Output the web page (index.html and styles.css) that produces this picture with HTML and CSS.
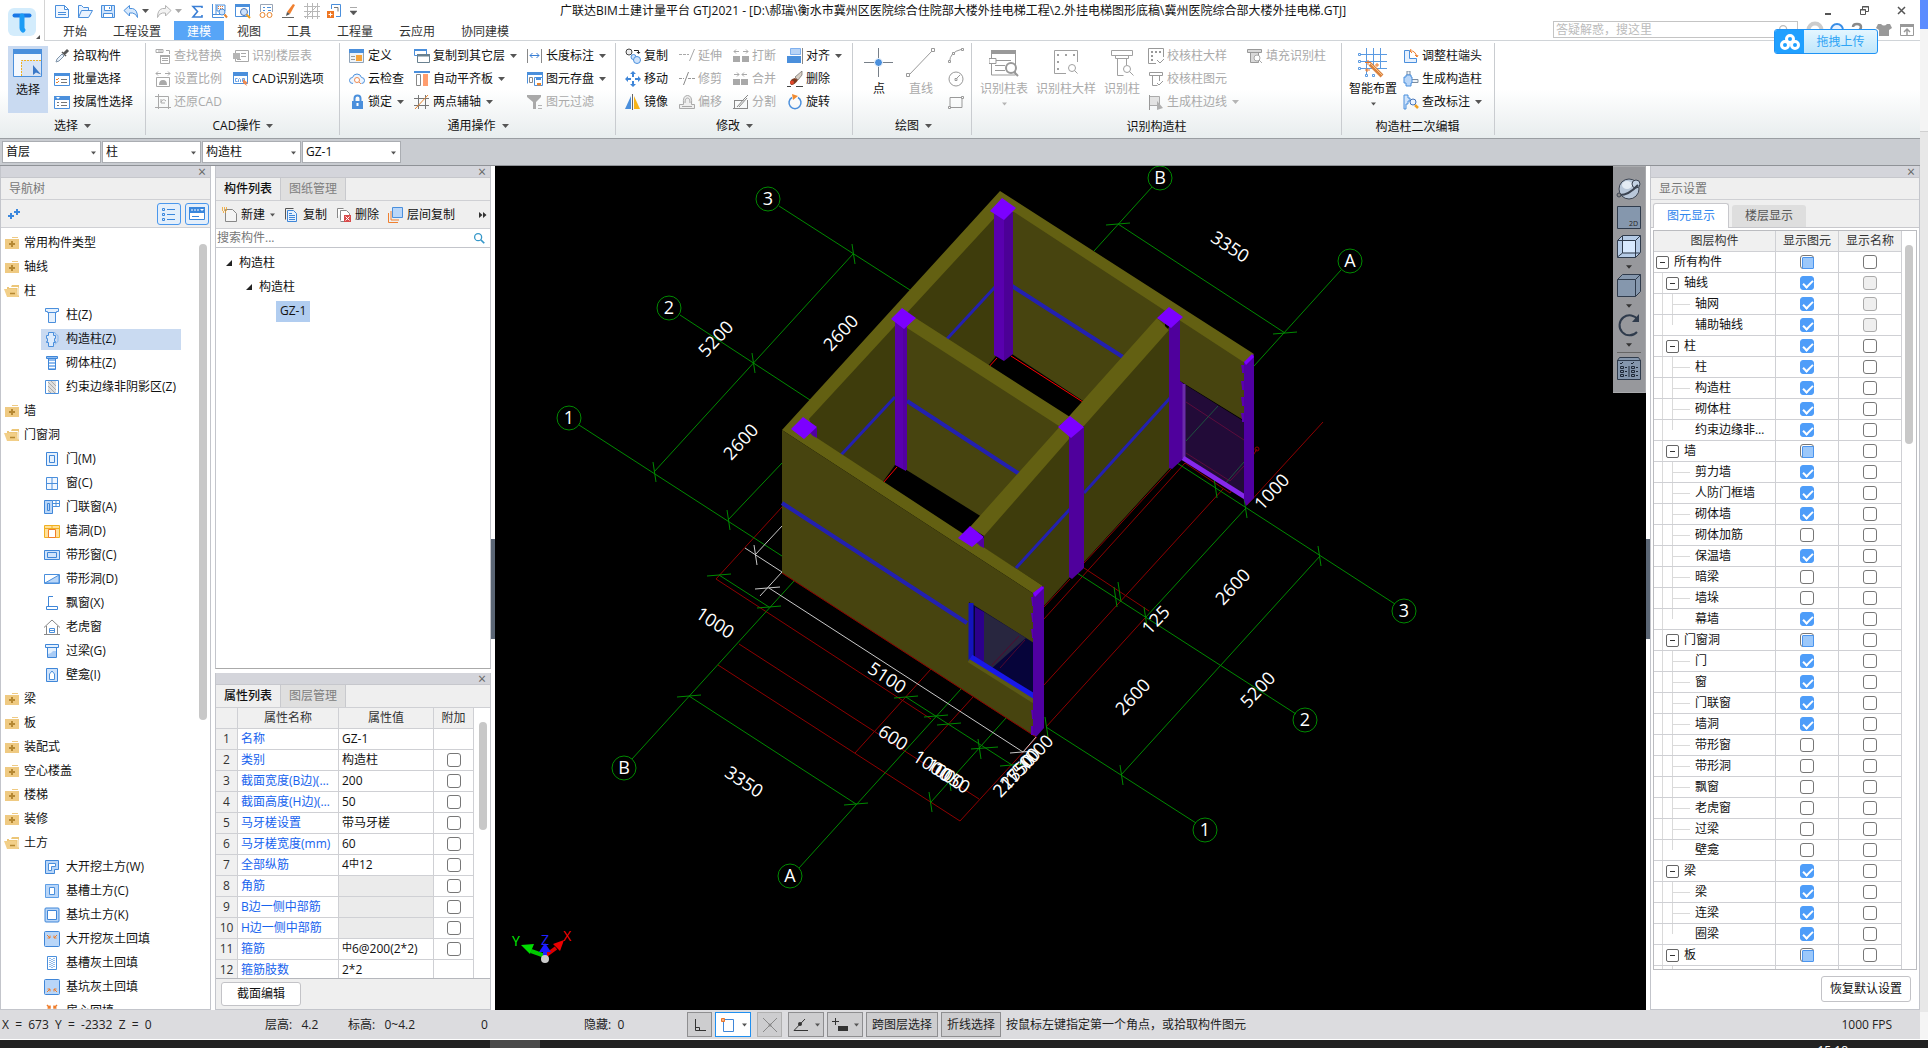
FILE: index.html
```html
<!DOCTYPE html>
<html lang="zh-CN">
<head>
<meta charset="utf-8">
<title>广联达BIM土建计量平台 GTJ2021</title>
<link rel="stylesheet" href="styles.css">
</head>
<body>
<svg class="defs" aria-hidden="true">
  <symbol id="i-caret" viewBox="0 0 7 4"><path d="M0 0h7L3.500 4z" fill="currentColor"/></symbol>
  <symbol id="i-new" viewBox="0 0 16 16"><path d="M1.500 2.500h9l4 4v8h-13zM10.500 2.500v4h4M4 9.500h8M4 11.500h8" fill="#f1f7ff" stroke="#4a8fdc"/></symbol>
  <symbol id="i-open" viewBox="0 0 16 16"><path d="M1.500 14.500v-12h3l2 2h5v3M1.500 14.500l3-7h11l-4 7z" fill="#eaf3ff" stroke="#4a8fdc"/></symbol>
  <symbol id="i-save" viewBox="0 0 16 16"><path d="M1.500 2.500h13v12h-13z" fill="#cfe3fb" stroke="#4a8fdc"/><path d="M4.500 2.500h7v5h-7zM3.500 10.500h9v4h-9zM9.500 4v2" fill="#fff" stroke="#4a8fdc"/></symbol>
  <symbol id="i-undo" viewBox="0 0 16 16"><path d="M1 7.500L6.500 2.500v3h3q5 1 5 9q-1.500-4-5-4.500h-3v3z" fill="#d6e8fc" stroke="#4a8fdc"/></symbol>
  <symbol id="i-redo" viewBox="0 0 16 16"><path d="M15 7.500L9.500 2.500v3h-3q-5 1-5 9q1.500-4 5-4.500h3v3z" fill="#f3f3f3" stroke="#b4b4b4"/></symbol>
  <symbol id="i-sigma" viewBox="0 0 16 16"><path d="M13 5V3.500H4L8.500 8.500 4 14h9v-2" fill="none" stroke="#3a7fd5" stroke-width="1.600"/></symbol>
  <symbol id="i-measure" viewBox="0 0 16 16"><path d="M.500 1v13.500H12M4 1v10M1 11.500h8" fill="none" stroke="#4a8fdc"/><path d="M5 2h8v6H5z" fill="#fff" stroke="#4a8fdc"/><path d="M6 3.500h6M6 5.500h6" stroke="#e07a3a" stroke-dasharray="1 1"/><circle cx="10" cy="9" r="3" fill="#cfe3fb" stroke="#4a8fdc"/><path d="M12.500 11.500L15 14.500" stroke="#e8852f" stroke-width="2"/></symbol>
  <symbol id="i-find" viewBox="0 0 16 16"><path d="M.500 1.500h14v12H.500z" fill="#fff" stroke="#4a8fdc"/><path d="M0 1h15v3H0z" fill="#4a8fdc"/><circle cx="9" cy="9" r="3.500" fill="#cfe3fb" stroke="#4472b8"/><path d="M11.500 11.500L15 15" stroke="#f0a020" stroke-width="2"/></symbol>
  <symbol id="i-review" viewBox="0 0 16 16"><path d="M2.500 9V1.500h12V9" fill="#fff" stroke="#9aa5b5"/><path d="M5 4.500h2M9 4.500h4M5 7.500h2M10 7.500h3" stroke="#4a8fdc"/><circle cx="4.500" cy="12" r="2.500" fill="#fff" stroke="#e8852f"/><circle cx="11.500" cy="12" r="2.500" fill="#fff" stroke="#e8852f"/></symbol>
  <symbol id="i-brush" viewBox="0 0 16 16"><path d="M6 9L12 1l2 1-5 9z" fill="#f08030"/><path d="M6 9l3 2-4 2z" fill="#555"/><path d="M1 14.500h12" stroke="#666"/></symbol>
  <symbol id="i-axisgrid" viewBox="0 0 16 16"><path d="M3.500 0v16M8.500 0v16M13.500 0v16M0 3.500h16M0 8.500h16M0 13.500h16M1 15L14 2" fill="none" stroke="#b8b8b8"/></symbol>
  <symbol id="i-import" viewBox="0 0 16 16"><path d="M4.500 6V1.500h9v12H9" fill="none" stroke="#4a8fdc"/><path d="M7 4.500h4v4" fill="none" stroke="#777"/><path d="M0 8h7v7H0z" fill="#ee7623"/><path d="M3.500 9.500v4M1.500 11.500h4" stroke="#fff"/></symbol>
  <symbol id="i-select" viewBox="0 0 30 30"><path d="M.500 1.500h28v26H.500z" fill="#f4f8fe" stroke="#4a8fdc"/><path d="M8 11h20v16H8z" fill="#d9e4f4"/><path d="M0 0h29v5H0z" fill="#4a8fdc"/><path d="M8.500 27V11.500H28" fill="none" stroke="#f0b020" stroke-dasharray="2 1"/><path d="M20 16v10l3-2.500 5 2z" fill="#3a78c8"/></symbol>
  <symbol id="i-dropper" viewBox="0 0 16 16"><path d="M2 14l1-3 5-5 2 2-5 5z" fill="#e8f1fc" stroke="#8094a8"/><path d="M8 4l4 4M10 5l3-3 1 1-3 3z" fill="#555" stroke="#555" stroke-width="1.500"/></symbol>
  <symbol id="i-batch" viewBox="0 0 16 16"><path d="M.500 2.500h15v12H.500z" fill="#fff" stroke="#4a8fdc"/><path d="M0 2h16v3H0z" fill="#4a8fdc"/><path d="M7 8.500h6M7 11.500h6" stroke="#777"/><path d="M2 8l1 1 2-2M2 11l1 1 2-2" fill="none" stroke="#e8852f"/></symbol>
  <symbol id="i-byprop" viewBox="0 0 16 16"><path d="M.500 2.500h15v12H.500z" fill="#fff" stroke="#4a8fdc"/><path d="M0 2h16v4H0z" fill="#4a8fdc"/><path d="M2 3h4L4 5z" fill="#fff"/><path d="M7 8.500h6M7 11.500h6M3 8.500h2M3 11.500h2" stroke="#777"/></symbol>
  <symbol id="i-replace" viewBox="0 0 16 16"><path d="M1 1.500h7v3H1zM4 1v3M6 1v3M11 2.500h3.500V6M5.500 7.500h9v8h-9zM7 10.500h6M7 12.500h6" fill="none" stroke="#a9a9a9"/><path d="M5 7h10v2H5z" fill="#a9a9a9"/></symbol>
  <symbol id="i-scale" viewBox="0 0 16 16"><path d="M1 2.500h5M10 2.500h5M3 .500L1 2.500l2 2M13 .500l2 2-2 2M1.500 6.500h13v9h-13z" fill="none" stroke="#a9a9a9"/><path d="M4 14q0-5 4-5t4 5z" fill="#a9a9a9"/></symbol>
  <symbol id="i-restore" viewBox="0 0 16 16"><path d="M3.500 0v15M0 2.500h13.500V15M0 13.500h16M6 8q2-4 5-1M6 5v4h4" fill="none" stroke="#a9a9a9"/></symbol>
  <symbol id="i-floortable" viewBox="0 0 16 16"><path d="M2.500 2.500h13v11h-13z" fill="#fff" stroke="#a9a9a9"/><path d="M0 5h7v6H0z" fill="#b5b5b5"/><path d="M8 5.500h5M8 8.500h5M4 11.500h4" stroke="#a9a9a9"/></symbol>
  <symbol id="i-cadopt" viewBox="0 0 16 16"><path d="M.500 1.500h14v11H.500z" fill="#fff" stroke="#4a8fdc"/><path d="M0 1h15v4H0z" fill="#4a8fdc"/><path d="M4.500 7.500h-2v3h2M5.500 11V8.500l1-1 1 1V11M9.500 7.500h2v3h-2z" fill="none" stroke="#6aa3e6"/><path d="M10 8l5 4-2 .5 1 2.500-4-3z" fill="#f08a50"/></symbol>
  <symbol id="i-define" viewBox="0 0 16 16"><path d="M.500 1.500h14v13H.500z" fill="#eef3f8" stroke="#8fa3b8"/><path d="M0 1h15v4H0z" fill="#4a8fdc"/><path d="M2 8.500h4M2 11.500h4" stroke="#999"/><path d="M7 7h6v6H7z" fill="#f5a33a"/></symbol>
  <symbol id="i-cloud" viewBox="0 0 16 16"><path d="M4 12.500q-3.500 0-3.500-3t3-3Q4.500 3 8 3t4.500 3.500q3 0 3 3t-3 3" fill="#eef5fe" stroke="#4a8fdc"/><circle cx="8" cy="9" r="2.500" fill="#fff" stroke="#f08a50"/><path d="M10 11l2 2" stroke="#f08a50"/></symbol>
  <symbol id="i-lock" viewBox="0 0 16 16"><path d="M5.500 7V4.500q0-3 3-3t3 3V7" fill="none" stroke="#4a8fdc" stroke-width="2"/><path d="M3 7h11v8H3z" fill="#4a8fdc"/><path d="M8.500 9v3" stroke="#fff" stroke-width="2"/></symbol>
  <symbol id="i-copyto" viewBox="0 0 16 16"><path d="M.500 1.500h12v6h-12z" fill="#fff" stroke="#4a8fdc"/><path d="M0 1h13v2H0z" fill="#4a8fdc"/><path d="M3.500 6.500h12v8h-12z" fill="#fff" stroke="#69808f"/><path d="M3 6h13v2.500H3z" fill="#69808f"/></symbol>
  <symbol id="i-alignslab" viewBox="0 0 16 16"><path d="M0 1h16" stroke="#4a8fdc" stroke-width="2"/><path d="M2.500 3.500h4v11h-4z" fill="#fff" stroke="#888"/><path d="M9 3h5v12H9z" fill="#ff9d6e"/></symbol>
  <symbol id="i-auxaxis" viewBox="0 0 16 16"><path d="M4.500 1v14M11.500 1v14M0 4.500h15M0 11.500h15" stroke="#777" fill="none"/><path d="M1 15L14 1" stroke="#e8852f"/></symbol>
  <symbol id="i-length" viewBox="0 0 16 16"><path d="M.500 1v14M14.500 1v14" stroke="#888"/><path d="M3 7.500h9M5.500 5L3 7.500 5.500 10M9.500 5L12 7.500 9.500 10" fill="none" stroke="#3a7fd5"/></symbol>
  <symbol id="i-store" viewBox="0 0 16 16"><path d="M.500 12.500v-11h15V7" fill="none" stroke="#4a8fdc"/><path d="M0 1h16v3H0z" fill="#4a8fdc"/><path d="M2.500 6.500h3v5h-3z" fill="none" stroke="#888"/><path d="M7.500 6.500h8v8h-8z" fill="#fff" stroke="#4a8fdc" stroke-width="1"/><path d="M9 7h5v2H9z" fill="#4a8fdc"/><path d="M10 12h4v2.500h-4z" fill="#e8852f"/></symbol>
  <symbol id="i-filter" viewBox="0 0 16 16"><path d="M0 1h14v2L9 8v7H6V8L0 3z" fill="#a9a9a9"/><path d="M11 11.500h4M11 14.500h4" stroke="#b5b5b5"/></symbol>
  <symbol id="i-copy" viewBox="0 0 16 16"><circle cx="4" cy="4" r="3" fill="#eee" stroke="#444"/><path d="M9 2.500h4.500V5" fill="none" stroke="#222"/><path d="M11.500 4h4l-2 2z" fill="#222"/><circle cx="8.500" cy="9" r="2.500" fill="#cfe3fb" stroke="#4a8fdc"/><circle cx="12" cy="12" r="3.500" fill="#cfe3fb" stroke="#4a8fdc"/></symbol>
  <symbol id="i-move" viewBox="0 0 16 16"><path d="M8 0l3 3H5zM8 16l3-3H5zM0 8l3-3v6zM16 8l-3-3v6zM7 3h2v3H7zM7 10h2v3H7zM3 7h3v2H3zM10 7h3v2h-3z" fill="#3f86d8"/></symbol>
  <symbol id="i-mirror" viewBox="0 0 16 16"><path d="M6 2v13H0z" fill="#4a8fdc"/><path d="M7.500 0v16" stroke="#666"/><path d="M9 2v13h6z" fill="#f8b418"/></symbol>
  <symbol id="i-extend" viewBox="0 0 16 16"><path d="M0 6.500h10" stroke="#a9a9a9" stroke-dasharray="3 1"/><path d="M15.500 1L10.500 13" stroke="#a9a9a9"/></symbol>
  <symbol id="i-trim" viewBox="0 0 16 16"><path d="M0 7.500h5M9 7.500h7" stroke="#999" stroke-dasharray="3 1"/><path d="M9.500 1L4.500 14" stroke="#888"/></symbol>
  <symbol id="i-offset" viewBox="0 0 16 16"><path d="M.500 14.500v-4h4q-1-9 4-9t4 9h3v4zM3 12.500h10M6 9q0-5 2.500-5T11 9" fill="#eee" stroke="#a9a9a9"/></symbol>
  <symbol id="i-break" viewBox="0 0 16 16"><path d="M0 8h7v6H0zM9 8h7v6H9z" fill="#a9a9a9"/><path d="M1 3.500h5M3 1.500l-2 2 2 2M10 3.500h5M13 1.500l2 2-2 2" fill="none" stroke="#a9a9a9"/></symbol>
  <symbol id="i-merge" viewBox="0 0 16 16"><path d="M0 8h7v6H0zM8 8h7v6H8z" fill="#a9a9a9"/><path d="M1 3.500h5M4 1.500l2 2-2 2M9 3.500h5M11 1.500l-2 2 2 2" fill="none" stroke="#a9a9a9"/></symbol>
  <symbol id="i-split" viewBox="0 0 16 16"><path d="M1.500 6.500h9M1.500 6v9M0 14.500h15M14.500 6v9M4 13l7-8 4-4M6 13l8-9" fill="none" stroke="#888"/></symbol>
  <symbol id="i-align" viewBox="0 0 16 16"><path d="M3.500 .500h10v6h-10z" fill="#b7d3f6" stroke="#7fb0ee"/><path d="M0 8h14v7H0z" fill="#4a8fdc"/><path d="M15.500 0v16" stroke="#888"/></symbol>
  <symbol id="i-erase" viewBox="0 0 16 16"><path d="M0 15.500h4M9 15.500h7" stroke="#444"/><path d="M8 6l7-6v4l-4 5z" fill="#d8cfc4" stroke="#555" stroke-width=".6"/><path d="M3 12q0-4 5-5l3 2q-3 5-7 5z" fill="#7a3a20"/><circle cx="5" cy="11.500" r="2" fill="#e2462a"/></symbol>
  <symbol id="i-rotate" viewBox="0 0 16 16"><path d="M5 3.500a6 6 0 1 0 6 0" fill="none" stroke="#4a8fdc" stroke-width="1.500"/><path d="M5 0l6 2-5 4z" fill="#f08a30"/></symbol>
  <symbol id="i-point" viewBox="0 0 30 30"><path d="M14.500 0v29M0 14.500h29" stroke="#777f88"/><circle cx="14.500" cy="14.500" r="4" fill="#4a8fdc" stroke="#fff"/></symbol>
  <symbol id="i-line" viewBox="0 0 30 30"><path d="M3 27L26 3" stroke="#999"/><path d="M.500 25.500h3v3h-3zM25.500 .500h3v3h-3z" fill="#fff" stroke="#999"/></symbol>
  <symbol id="i-arc" viewBox="0 0 16 16"><path d="M1.500 14Q2 4 13 1.500" fill="none" stroke="#999"/><path d="M.500 12.500h2v2h-2zM4.500 4.500h2v2h-2zM13.500 .500h2v2h-2z" fill="#fff" stroke="#999"/></symbol>
  <symbol id="i-circle" viewBox="0 0 16 16"><circle cx="8" cy="8" r="7" fill="none" stroke="#999"/><path d="M7 7.500h2v2H7zM9 7l3-3" fill="none" stroke="#999"/></symbol>
  <symbol id="i-rect" viewBox="0 0 16 16"><path d="M2 3.500h12v10H2z" fill="none" stroke="#999"/><path d="M.500 12.500h2v2h-2zM13.500 2.500h2v2h-2z" fill="#fff" stroke="#999"/></symbol>
  <symbol id="i-idtable" viewBox="0 0 30 30"><path d="M2.500 3v24h24V3M6 12.500h16M6 17.500h10M6 22.500h10" fill="none" stroke="#999"/><path d="M2 2h25v4H2z" fill="#999"/><path d="M0 10.500h7v5H0z" fill="#fff" stroke="#999"/><circle cx="22" cy="20" r="5" fill="#fff" stroke="#999" stroke-width="2"/><path d="M25 24l4 4" stroke="#999" stroke-width="2"/></symbol>
  <symbol id="i-iddetail" viewBox="0 0 30 30"><path d="M15 25.500H3.500v-23h23V14" fill="none" stroke="#a0a0a0"/><path d="M6 6h2v2H6zM14 6h2v2h-2zM22 6h2v2h-2zM6 13h2v2H6zM6 20h2v2H6z" fill="#a0a0a0"/><circle cx="21" cy="20" r="3.500" fill="#fff" stroke="#a0a0a0"/><path d="M23.500 22.500l3 3" stroke="#a0a0a0"/></symbol>
  <symbol id="i-idcol" viewBox="0 0 30 30"><path d="M4.500 2.500h21v5h-21zM8.500 7.500h13v3h-13zM10.500 10.500v17h6M19.500 10.500V17" fill="none" stroke="#a0a0a0"/><circle cx="20" cy="21" r="3.500" fill="#fff" stroke="#a0a0a0"/><path d="M22.500 23.500l4 4" stroke="#a0a0a0"/></symbol>
  <symbol id="i-chkdetail" viewBox="0 0 16 16"><path d="M8 15.500H.500V.500h15V9" fill="none" stroke="#999"/><path d="M3 3h2v2H3zM7 3h2v2H7zM11 3h2v2h-2zM3 7h2v2H3zM3 11h2v2H3z" fill="#999"/><path d="M9 12l3 3 4-4" fill="none" stroke="#999"/></symbol>
  <symbol id="i-chkelem" viewBox="0 0 16 16"><path d="M1.500 1.500h13v3h-13zM4.500 4.500v10h5M11.500 4.500V10" fill="none" stroke="#999"/><path d="M9 12l2 2 4-4" fill="none" stroke="#999"/></symbol>
  <symbol id="i-genedge" viewBox="0 0 16 16"><path d="M1.500 2.500h10v9h-10z" fill="#e3e3e3" stroke="#aaa"/><path d="M1.500 1v15" stroke="#999"/><path d="M9 7v9l6-2z" fill="#b0b0b0"/></symbol>
  <symbol id="i-fillid" viewBox="0 0 16 16"><path d="M.500 1.500h14v3H.500zM3.500 4.500h8v10h-8z" fill="#d9d9d9" stroke="#999"/><circle cx="10" cy="10" r="3" fill="#fff" stroke="#aaa"/><path d="M12 12l3 3" stroke="#aaa"/></symbol>
  <symbol id="i-smart" viewBox="0 0 30 30"><path d="M8.500 0v26M15.500 0v22M22.500 0v20M2 6.500h27M2 13.500h27M2 20.500h27" stroke="#5a9ae2" fill="none"/><path d="M.500 5.500h2v2h-2zM.500 12.500h2v2h-2zM.500 19.500h2v2h-2zM7.500 26.500h2v2h-2zM14.500 26.500h2v2h-2z" fill="#fff" stroke="#5a9ae2"/><path d="M12 16l12 12" stroke="#d9823f" stroke-width="4"/><path d="M13 16l11 11" stroke="#f6c48c"/><path d="M10 12v5M7 14.500h6M19 15v4M17 17h4M9 20v4M7 22h5" stroke="#ef7d2b"/></symbol>
  <symbol id="i-adjust" viewBox="0 0 16 16"><path d="M1.500 2.500h5v8h7v4h-12z" fill="#e6f0fd" stroke="#4a8fdc"/><path d="M7 3q5-1 7 6M8 1l-1 2 2 2M12 7l2 2 1-2" fill="none" stroke="#ef7d2b"/></symbol>
  <symbol id="i-genstruct" viewBox="0 0 16 16"><path d="M4 0h3v4H4zM8 8.500h7v3H8z" fill="#eef3f8" stroke="#7c8da0"/><path d="M3 4h5v2h1v6H8v3H3v-3H1V6h2z" fill="#b9d6f8" stroke="#4a8fdc"/></symbol>
  <symbol id="i-chknote" viewBox="0 0 16 16"><path d="M1 1h4v3h2v3H5v3H3v5H1z" fill="#cfe3fb" stroke="#4a8fdc"/><circle cx="10" cy="8" r="3" fill="#eaf3ff" stroke="#4472b8"/><path d="M12 11l3 3" stroke="#f0a020" stroke-width="2.500"/></symbol>
  <symbol id="i-mag" viewBox="0 0 16 16"><circle cx="7" cy="7" r="4" fill="none" stroke="currentColor" stroke-width="1.500"/><path d="M10 10l4 4" stroke="currentColor" stroke-width="2"/></symbol>
  <symbol id="i-folder" viewBox="0 0 16 16"><path d="M2 4h14v10H2zM9 2h6v1H9z" fill="#efca82"/><path d="M9 6v6M6 9h6" stroke="#b58833" stroke-width="2"/></symbol>
  <symbol id="i-folderopen" viewBox="0 0 16 16"><path d="M4 4h4l1-2h7v12H4z" fill="#ecc678"/><path d="M6 4.500h9v8" fill="none" stroke="#fff"/><path d="M1 6h12l2 8H4z" fill="#f2cf88"/><path d="M7 10.500h5" stroke="#b58833" stroke-width="1.500"/></symbol>
  <symbol id="t-col" viewBox="0 0 16 16"><path d="M1.500 1.500h13v3h-2v1h-9v-1h-2zM4.500 5.500v10h7v-10" fill="#e6f1fd" stroke="#4a8fdc"/></symbol>
  <symbol id="t-gz" viewBox="0 0 16 16"><path d="M6 1.500h5q1 3 3 3v6q-2 1-3 3" fill="none" stroke="#8ab8ee"/><path d="M4.500 1.500h5v3h2v3h-1v3h1v1h-2v4h-5v-4h-2v-1h1v-3h-1v-3h2z" fill="#dcebfc" stroke="#4a8fdc"/></symbol>
  <symbol id="t-brick" viewBox="0 0 16 16"><path d="M2.500 1.500h11v2h-11zM4.500 3.500h7v11h-7z" fill="#8fbcf0" stroke="#3f86d8"/><path d="M5 6.500h6M5 9.500h6M5 12.500h6" stroke="#fff"/></symbol>
  <symbol id="t-hatch" viewBox="0 0 16 16"><path d="M1.500 1.500h13v13h-13z" fill="#fff" stroke="#4a8fdc"/><path d="M4 2h8v12H4z" fill="#ddd"/><path d="M4 3l8 8M4 7l7 7M4 11l3 3M7 2l5 5" stroke="#aaa"/></symbol>
  <symbol id="t-door" viewBox="0 0 16 16"><path d="M2.500 1.500h11v13h-11zM5.500 4.500h5v7h-5z" fill="#e6f1fd" stroke="#3f86d8"/></symbol>
  <symbol id="t-win" viewBox="0 0 16 16"><path d="M2.500 2.500h11v12h-11zM8 2v12M3 8.500h10" fill="#f1f7ff" stroke="#4a8fdc"/></symbol>
  <symbol id="t-dw" viewBox="0 0 16 16"><path d="M.500 1.500h8v13h-8zM3.500 4.500h2v7h-2z" fill="#b9d6f8" stroke="#3f86d8"/><path d="M8.500 1.500h7v6h-7zM12 2v6M8 4.500h8" fill="#fff" stroke="#4a8fdc"/></symbol>
  <symbol id="t-hole" viewBox="0 0 16 16"><path d="M.500 2.500h15v12H.500z" fill="#ffe09a" stroke="#f0b020"/><path d="M0 5.500h16M8 2v3" stroke="#f0b020"/><path d="M4.500 6.500h7v8h-7z" fill="#fff" stroke="#ef7d2b"/></symbol>
  <symbol id="t-sw" viewBox="0 0 16 16"><path d="M.500 3.500h15v9H.500zM3.500 5.500h9v5h-9z" fill="#cfe3fb" stroke="#3f86d8"/></symbol>
  <symbol id="t-sh" viewBox="0 0 16 16"><path d="M.500 3.500h15v9H.500z" fill="#fff" stroke="#4a8fdc"/><path d="M1 12h14V4z" fill="#b9d6f8" stroke="#4a8fdc"/></symbol>
  <symbol id="t-bay" viewBox="0 0 16 16"><path d="M9 1.500H4.500v10M2.500 11.500h11v3h-11z" fill="none" stroke="#3f86d8"/></symbol>
  <symbol id="t-dormer" viewBox="0 0 16 16"><path d="M0 8.500L8 1l8 7.500M2.500 7v8M13.500 7v8M0 15.500h16" fill="none" stroke="#888"/><path d="M5.500 9.500h5v4h-5zM5 11.500h6" fill="none" stroke="#4a8fdc"/></symbol>
  <symbol id="t-lintel" viewBox="0 0 16 16"><path d="M1.500 1.500h13v3h-13zM3.500 4.500h9v10h-9z" fill="#e6f1fd" stroke="#3f86d8"/><path d="M4 14v-3l3-1 2-2h3v6z" fill="#a8cbf5"/></symbol>
  <symbol id="t-niche" viewBox="0 0 16 16"><path d="M2.500 1.500h11v13h-11z" fill="#cfe3fb" stroke="#3f86d8"/><path d="M5.500 12.500V7l2.500-3 2.500 3v5.500z" fill="#fff" stroke="#4a8fdc"/></symbol>
  <symbol id="t-ex" viewBox="0 0 16 16"><path d="M1.500 1.500h13v9h-4v4h-9z" fill="#b9d6f8" stroke="#3f86d8"/><path d="M4.500 4.500h7v3h-4v4h-3z" fill="#fff" stroke="#4a8fdc"/></symbol>
  <symbol id="t-trench" viewBox="0 0 16 16"><path d="M1.500 1.500h13v13h-13z" fill="#b9d6f8" stroke="#5f9fe6"/><path d="M5.500 4.500h5v7h-5z" fill="#fff" stroke="#4a8fdc"/></symbol>
  <symbol id="t-pit" viewBox="0 0 16 16"><rect x="1" y="1" width="14" height="14" rx="1" fill="#b9d6f8" stroke="#3f86d8"/><path d="M3.500 3.500h9v9h-9z" fill="#fff" stroke="#3f86d8"/></symbol>
  <symbol id="t-fill" viewBox="0 0 16 16"><rect x=".5" y=".5" width="15" height="15" rx="1" fill="#b9d6f8" stroke="#3f86d8"/><path d="M3 4l3 3M6 4.500V7H3.500M13 4l-3 3M10 4.500V7h2.500" fill="none" stroke="#ef7d2b"/></symbol>
  <symbol id="t-fillup" viewBox="0 0 16 16"><rect x=".5" y=".5" width="15" height="15" rx="1" fill="#b9d6f8" stroke="#3f86d8"/><path d="M3 13l3-3M6 12.500V10H3.500M13 13l-3-3M10 12.500V10h2.500" fill="none" stroke="#ef7d2b"/></symbol>
  <symbol id="t-room" viewBox="0 0 16 16"><path d="M3 2l3 3M6 2.500V5H3.500M13 2l-3 3M10 2.500V5h2.500M3 14l3-3M13 14l-3-3" fill="none" stroke="#ef7d2b" stroke-width="1.500"/></symbol>
  <symbol id="t-dots" viewBox="0 0 16 16"><path d="M3.500 1.500h9v13h-9z" fill="#fff" stroke="#4a8fdc"/><path d="M6 3v10M8 4v10M10 3v10" stroke="#6fa5e4" stroke-dasharray="1 1" stroke-width="1.500"/></symbol>
</svg>

<div class="desktop">
<div class="app">
  <header class="top">
    <button class="logo" aria-label="应用菜单"><svg width="30" height="30" viewBox="0 0 30 30"><rect x="1" y="0" width="28" height="28" rx="6" fill="#d3ecfc"/><path d="M7.500 7.500h15" stroke="#1a78e6" stroke-width="4" stroke-linecap="round"/><path d="M15 8v12q0 1 1 2" stroke="#1c9cf5" stroke-width="5" stroke-linecap="round" fill="none"/></svg><svg class="corner" width="4" height="4"><path d="M4 0v4H0z" fill="#555"/></svg></button>
    <div class="topmain">
      <div class="titlebar">
        <div class="qat">
          <button aria-label="新建"><svg><use href="#i-new"/></svg></button>
          <button aria-label="打开"><svg><use href="#i-open"/></svg></button>
          <button aria-label="保存"><svg><use href="#i-save"/></svg></button>
          <button aria-label="撤销" class="split"><svg><use href="#i-undo"/></svg><svg class="caret"><use href="#i-caret"/></svg></button>
          <button aria-label="恢复" class="split off"><svg><use href="#i-redo"/></svg><svg class="caret"><use href="#i-caret"/></svg></button>
          <button aria-label="汇总"><svg><use href="#i-sigma"/></svg></button>
          <button aria-label="查量"><svg><use href="#i-measure"/></svg></button>
          <button aria-label="查找"><svg><use href="#i-find"/></svg></button>
          <button aria-label="检查"><svg><use href="#i-review"/></svg></button>
          <button aria-label="格式刷"><svg><use href="#i-brush"/></svg></button>
          <button aria-label="轴网"><svg><use href="#i-axisgrid"/></svg></button>
          <button aria-label="导入"><svg><use href="#i-import"/></svg></button>
          <button aria-label="自定义" class="more"><svg class="caret" viewBox="0 0 7 8"><path d="M0 .500h7M0 4h7L3.500 8z" fill="#555" stroke="#555" stroke-width=".5"/></svg></button>
        </div>
        <h1>广联达BIM土建计量平台 GTJ2021 - [D:\郝瑞\衡水市冀州区医院综合住院部大楼外挂电梯工程\2.外挂电梯图形底稿\冀州医院综合部大楼外挂电梯.GTJ]</h1>
        <div class="wincontrols">
          <button aria-label="最小化"><svg width="8" height="9" viewBox="0 0 8 9"><path d="M1 8h6" stroke="#555" stroke-width="2"/></svg></button>
          <button aria-label="还原"><svg width="9" height="9" viewBox="0 0 9 9"><path d="M2.500 3V.500h6v5H6M.500 3.500h5v5h-5zM0 4h6M2 1h7" fill="none" stroke="#555"/></svg></button>
          <button aria-label="关闭"><svg width="9" height="9" viewBox="0 0 9 9"><path d="M1 1l7 7M8 1L1 8" stroke="#555" stroke-width="1.500"/></svg></button>
        </div>
      </div>
      <div class="tabbar">
        <nav class="tabs">
          <a href="#">开始</a><a href="#">工程设置</a><a href="#" class="on">建模</a><a href="#">视图</a><a href="#">工具</a><a href="#">工程量</a><a href="#">云应用</a><a href="#">协同建模</a>
        </nav>
        <div class="help">
          <div class="asksearch"><input type="text" aria-label="搜索帮助" placeholder="答疑解惑，搜这里"><svg width="14" height="14"><use href="#i-mag"/></svg></div>
          <button aria-label="用户"><svg width="18" height="18" viewBox="0 0 18 18"><circle cx="9" cy="9" r="6.500" fill="none" stroke="#ccc" stroke-width="4"/></svg></button>
          <button aria-label="客服"><svg width="18" height="18" viewBox="0 0 18 18"><circle cx="9" cy="9" r="6" fill="#e8f2ff" stroke="#3a8ee6" stroke-width="2"/></svg></button>
          <button aria-label="帮助"><svg width="14" height="18" viewBox="0 0 14 18"><path d="M3 6q0-3 4-3t4 3-4 4v2" fill="none" stroke="#8a8a8a" stroke-width="2.500"/></svg></button>
          <button aria-label="皮肤" class="skin"><svg width="16" height="18" viewBox="0 0 16 18"><path d="M2 3h3q3 3 6 0h3l2 4-3 2v6H3V9L0 7z" fill="#999"/></svg></button>
          <button aria-label="收起功能区"><svg width="14" height="18" viewBox="0 0 14 18"><path d="M.500 3.500h13v11H.500z" fill="none" stroke="#999"/><path d="M0 3h14v3H0z" fill="#999"/><path d="M7 14V8M4 11l3-3 3 3" fill="none" stroke="#999" stroke-width="1.500"/></svg></button>
        </div>
      </div>
    </div>
  </header>

  <section class="ribbon">
    <div class="group g-select">
      <div class="tools">
        <button class="big on"><svg><use href="#i-select"/></svg>选择</button>
        <div class="col">
          <button class="tool"><svg><use href="#i-dropper"/></svg>拾取构件</button>
          <button class="tool"><svg><use href="#i-batch"/></svg>批量选择</button>
          <button class="tool"><svg><use href="#i-byprop"/></svg>按属性选择</button>
        </div>
      </div>
      <button class="name">选择<svg class="caret"><use href="#i-caret"/></svg></button>
    </div>
    <div class="group g-cad">
      <div class="tools">
        <div class="col">
          <button class="tool" disabled><svg><use href="#i-replace"/></svg>查找替换</button>
          <button class="tool" disabled><svg><use href="#i-scale"/></svg>设置比例</button>
          <button class="tool" disabled><svg><use href="#i-restore"/></svg>还原CAD</button>
        </div>
        <div class="col">
          <button class="tool" disabled><svg><use href="#i-floortable"/></svg>识别楼层表</button>
          <button class="tool"><svg><use href="#i-cadopt"/></svg>CAD识别选项</button>
        </div>
      </div>
      <button class="name">CAD操作<svg class="caret"><use href="#i-caret"/></svg></button>
    </div>
    <div class="group g-common">
      <div class="tools">
        <div class="col">
          <button class="tool"><svg><use href="#i-define"/></svg>定义</button>
          <button class="tool"><svg><use href="#i-cloud"/></svg>云检查</button>
          <button class="tool"><svg><use href="#i-lock"/></svg>锁定<svg class="caret"><use href="#i-caret"/></svg></button>
        </div>
        <div class="col">
          <button class="tool"><svg><use href="#i-copyto"/></svg>复制到其它层<svg class="caret"><use href="#i-caret"/></svg></button>
          <button class="tool"><svg><use href="#i-alignslab"/></svg>自动平齐板<svg class="caret"><use href="#i-caret"/></svg></button>
          <button class="tool"><svg><use href="#i-auxaxis"/></svg>两点辅轴<svg class="caret"><use href="#i-caret"/></svg></button>
        </div>
        <div class="col">
          <button class="tool"><svg><use href="#i-length"/></svg>长度标注<svg class="caret"><use href="#i-caret"/></svg></button>
          <button class="tool"><svg><use href="#i-store"/></svg>图元存盘<svg class="caret"><use href="#i-caret"/></svg></button>
          <button class="tool" disabled><svg><use href="#i-filter"/></svg>图元过滤</button>
        </div>
      </div>
      <button class="name">通用操作<svg class="caret"><use href="#i-caret"/></svg></button>
    </div>
    <div class="group g-modify">
      <div class="tools">
        <div class="col">
          <button class="tool"><svg><use href="#i-copy"/></svg>复制</button>
          <button class="tool"><svg><use href="#i-move"/></svg>移动</button>
          <button class="tool"><svg><use href="#i-mirror"/></svg>镜像</button>
        </div>
        <div class="col">
          <button class="tool" disabled><svg><use href="#i-extend"/></svg>延伸</button>
          <button class="tool" disabled><svg><use href="#i-trim"/></svg>修剪</button>
          <button class="tool" disabled><svg><use href="#i-offset"/></svg>偏移</button>
        </div>
        <div class="col">
          <button class="tool" disabled><svg><use href="#i-break"/></svg>打断</button>
          <button class="tool" disabled><svg><use href="#i-merge"/></svg>合并</button>
          <button class="tool" disabled><svg><use href="#i-split"/></svg>分割</button>
        </div>
        <div class="col">
          <button class="tool"><svg><use href="#i-align"/></svg>对齐<svg class="caret"><use href="#i-caret"/></svg></button>
          <button class="tool"><svg><use href="#i-erase"/></svg>删除</button>
          <button class="tool"><svg><use href="#i-rotate"/></svg>旋转</button>
        </div>
      </div>
      <button class="name">修改<svg class="caret"><use href="#i-caret"/></svg></button>
    </div>
    <div class="group g-draw">
      <div class="tools">
        <button class="big"><svg><use href="#i-point"/></svg>点</button>
        <button class="big" disabled><svg><use href="#i-line"/></svg>直线</button>
        <div class="col">
          <button class="tool" disabled aria-label="弧"><svg><use href="#i-arc"/></svg></button>
          <button class="tool" disabled aria-label="圆"><svg><use href="#i-circle"/></svg></button>
          <button class="tool" disabled aria-label="矩形"><svg><use href="#i-rect"/></svg></button>
        </div>
      </div>
      <button class="name">绘图<svg class="caret"><use href="#i-caret"/></svg></button>
    </div>
    <div class="group g-identify">
      <div class="tools">
        <button class="big" disabled><svg><use href="#i-idtable"/></svg>识别柱表<svg class="caret"><use href="#i-caret"/></svg></button>
        <button class="big" disabled><svg><use href="#i-iddetail"/></svg>识别柱大样</button>
        <button class="big" disabled><svg><use href="#i-idcol"/></svg>识别柱</button>
        <div class="col">
          <button class="tool" disabled><svg><use href="#i-chkdetail"/></svg>校核柱大样</button>
          <button class="tool" disabled><svg><use href="#i-chkelem"/></svg>校核柱图元</button>
          <button class="tool" disabled><svg><use href="#i-genedge"/></svg>生成柱边线<svg class="caret"><use href="#i-caret"/></svg></button>
        </div>
        <div class="col">
          <button class="tool" disabled><svg><use href="#i-fillid"/></svg>填充识别柱</button>
        </div>
      </div>
      <span class="name">识别构造柱</span>
    </div>
    <div class="group g-second">
      <div class="tools">
        <button class="big"><svg><use href="#i-smart"/></svg>智能布置<svg class="caret"><use href="#i-caret"/></svg></button>
        <div class="col">
          <button class="tool"><svg><use href="#i-adjust"/></svg>调整柱端头</button>
          <button class="tool"><svg><use href="#i-genstruct"/></svg>生成构造柱</button>
          <button class="tool"><svg><use href="#i-chknote"/></svg>查改标注<svg class="caret"><use href="#i-caret"/></svg></button>
        </div>
      </div>
      <span class="name">构造柱二次编辑</span>
    </div>
  </section>

  <section class="filters">
    <label class="combo"><select aria-label="楼层"><option>首层</option></select><svg class="caret"><use href="#i-caret"/></svg></label>
    <label class="combo"><select aria-label="构件大类"><option>柱</option></select><svg class="caret"><use href="#i-caret"/></svg></label>
    <label class="combo"><select aria-label="构件类型"><option>构造柱</option></select><svg class="caret"><use href="#i-caret"/></svg></label>
    <label class="combo"><select aria-label="构件"><option>GZ-1</option></select><svg class="caret"><use href="#i-caret"/></svg></label>
  </section>

  <main class="main">
    <aside class="panel nav">
      <div class="grip"><button aria-label="关闭导航树">×</button></div>
      <h2 class="ptitle">导航树</h2>
      <div class="navtools">
        <button aria-label="展开" class="plus"><svg width="14" height="12" viewBox="0 0 14 12"><path d="M4 5v6M1 8h6M10 1v6M7 4h6" stroke="#3a87dd" stroke-width="2"/></svg></button>
        <button aria-label="列表视图" class="view"><svg width="14" height="14" viewBox="0 0 14 14"><path d="M5 2.500h8M5 7.500h8M5 12.500h8M.500 1.500h2v2h-2zM.500 6.500h2v2h-2zM.500 11.500h2v2h-2z" fill="none" stroke="#3a87dd"/></svg></button>
        <button aria-label="图标视图" class="view"><svg width="16" height="14" viewBox="0 0 16 14"><path d="M.500 .500h15v12H.500z" fill="#fff" stroke="#3a87dd"/><path d="M0 0h16v6H0z" fill="#3a87dd"/><path d="M2 3h2M5 3h2M8 3h2" stroke="#fff"/><path d="M11 2h4l-2 2z" fill="#fff"/><path d="M3 9.500h7" stroke="#3a87dd"/></svg></button>
      </div>
      <div class="navbody"><ul class="navlist" id="nav"></ul><div class="thumb navthumb"></div></div>
    </aside>

    <div class="middle">
      <section class="panel comps">
        <div class="grip"><button aria-label="关闭构件列表">×</button></div>
        <div class="ptabs"><button class="on">构件列表</button><button>图纸管理</button></div>
        <div class="comptools">
          <button><svg viewBox="0 0 16 16"><path d="M3.500 2.500h7l4 4v8h-11z" fill="#f4f4f4" stroke="#888"/><path d="M0 1h5M0 3h5M1 5h4" stroke="#f0a020" stroke-width="1.500" stroke-dasharray="1 1"/></svg>新建<svg class="caret"><use href="#i-caret"/></svg></button>
          <button><svg viewBox="0 0 16 16"><path d="M1.500 12.500v-11h8" fill="none" stroke="#555"/><path d="M3.500 3.500h6l3 3v8h-9zM5 8.500h6M5 10.500h6M5 12.500h6M5 6.500h3" fill="#e6f1fd" stroke="#3f86d8"/></svg>复制</button>
          <button><svg viewBox="0 0 16 16"><path d="M1.500 11V1.500h6M4.500 13.500v-10h6l3 3v8h-9" fill="#fff" stroke="#888"/><path d="M8 8h7v7H8z" fill="#d94a4a"/><path d="M9.500 9.500l4 4M13.500 9.500l-4 4" stroke="#fff"/></svg>删除</button>
          <button><svg viewBox="0 0 16 16"><path d="M.500 6v9.500H10M3 4v9h8" fill="none" stroke="#ef8030" stroke-width="1"/><path d="M4.500 .500h10v10h-10z" fill="#b9d6f8" stroke="#4a8fdc"/></svg>层间复制</button>
          <button aria-label="更多" class="more"><svg width="8" height="6" viewBox="0 0 8 6"><path d="M0 0l3.500 3L0 6zM4 0l3.500 3L4 6z" fill="#333"/></svg></button>
        </div>
        <div class="search"><input type="text" aria-label="搜索构件" placeholder="搜索构件..."><svg><use href="#i-mag"/></svg></div>
        <ul class="comptree">
          <li><svg class="tri"><path d="M6 0v6H0z"/></svg>构造柱</li>
          <li class="l1"><svg class="tri"><path d="M6 0v6H0z"/></svg>构造柱</li>
          <li class="l2"><span class="sel">GZ-1</span></li>
        </ul>
      </section>
      <section class="panel props">
        <div class="grip"><button aria-label="关闭属性列表">×</button></div>
        <div class="ptabs"><button class="on">属性列表</button><button>图层管理</button></div>
        <div class="propbody">
          <table class="proptable">
            <colgroup><col class="c-no"><col class="c-name"><col class="c-val"><col class="c-add"></colgroup>
            <thead><tr><th></th><th>属性名称</th><th>属性值</th><th>附加</th></tr></thead>
            <tbody id="props"></tbody>
          </table>
          <div class="thumb propthumb"></div>
        </div>
        <div class="propfoot"><button class="btn">截面编辑</button></div>
      </section>
    </div>

    <div class="splitter"></div>

    <section class="stage">
      <svg class="scene" viewBox="495 166 1151 844" role="img" aria-label="三维模型">
        <g class="red"><path d="M1323 422L1247 505M1185 463L1044 619M1223 489L1044 685M1145 618L1046 727M1084 568L1149 611M782 507L716 579L931 719M739 644L979 799M718 665L960 821L1037 737M931 669L855 753M973 697L924 751M1185 463L1230 493L1257 449"/></g>
        <g class="green">
          <path d="M779 206L910 290M680 315L810 400M579 425L782 556M853 254L654 472M782 463L728 520M719 575L769 607"/>
          <path d="M1152 187L1094 251M1341 270L1254 366M1118 224L1285 333M794 581L632 759M961 689L799 868M689 696L856 804"/>
          <path d="M1006 718L931 802M906 697L1012 765M1077 573L1296 714M1177 463L1395 604M1046 727L1196 823M1246 508L1146 617M1320 556L1121 775"/>
          <path d="M852 244l3 20M752 353l3 20M653 462l3 20M727 510l3 20M1214 478l3 20M1244 498l3 20M1318 546l3 20M1114 587l3 20M1118 582l3 20M1144 607l3 20M1120 765l3 20M1045 717l3 20M978 739l3 20M948 771l3 20M929 792l3 20"/>
          <path d="M707 576l24-2M757 608l24-2M1106 225l24-2M1273 334l24-2M677 697l24-2M844 805l24-2M894 698l24-2M924 717l24-2M937 725l24-2M971 749l27-2M1000 766l24-2"/>
        </g>
        <g class="white"><path d="M769 588L1023 752M782 572L760 596M745 548L782 572M782 526L755 555M1036 737L1023 752M754 545l3 20M755 589l25-2M1010 753l24-2"/></g>

        <path class="inner" d="M996 212V356L987 367 905 465V305z"/>
        <path class="face" d="M1012 208L1165 308V455L1012 354z"/>
        <path class="rl" d="M997 358L987 369M1011 356L1086 404"/>
        <path class="band" d="M995 287L946 340"/><path class="band w" d="M1012 286L1126 359"/>
        <path class="inner" d="M805 420L895 320V465L882 483 815 441z"/>
        <path class="face" d="M905 325L1062 426V438L982 517 905 469z"/>
        <path class="rl" d="M897 467L883 483"/>
        <path class="band" d="M895 397L841 455"/><path class="band w" d="M907 401L1021 475"/>
        <path class="inner" d="M1084 422L1170 326V468L1084 562zM984 534L1070 436V577L1043 607V586L984 548z"/>
        <path class="band" d="M1084 493L1170 398M1070 509L1016 568"/>
        <path class="face" d="M1179 318L1245 361V421L1180 381z"/>
        <path class="strip" d="M782 430L1000 191 1254 354 1245 363 1014 212 1000 212 809 419 817 438 1043 586 1034 594z"/>
        <path class="strip" d="M914 317L1070 417 1059 426 904 326zM1157 318L1169 330 1083 427 1069 439 984 536 970 527z"/>
        <path class="face" d="M782 430L1034 594 1036 737 782 573z"/>
        <path class="redln" d="M782 573L1036 737M1084 563L1171 469M1044 607L1070 579"/>
        <path class="band w" d="M782 503L967 623"/>

        <path d="M994 212V355L1004 361V212z" fill="#5900ae"/><path d="M1004 212V361L1013 354V212z" fill="#4c0096"/>
        <path d="M895 320V465L906 471V320z" fill="#5900ae"/><path d="M903 320h4V470l-4-2z" fill="#5200a0"/>
        <path d="M1169 320V468L1172 469 1184 458V384L1180 381V318z" fill="#4f009c"/>
        <path d="M1069 427V577L1072 579 1084 568V427z" fill="#4f009c"/>
        <path d="M805 428h12v10l-4-2z M972 538h12v10l-4-2z" fill="#5200a0"/>
        <path class="cap" d="M1002 198L1016 208 1004 220 990 211zM902 308L916 318 904 329 891 319zM803 417L817 427 804 439 791 429zM1169 307L1183 317 1171 328 1157 318zM1070 416L1084 427 1071 438 1058 427zM970 526L984 537 972 547 958 538z"/>

        <path d="M1184 384L1245 422V495L1184 458z" fill="#220b38"/>
        <path d="M1186 402L1244 440M1186 453L1230 481 1244 466" stroke="#5c0b3c" fill="none"/>
        <path d="M1186 441L1218 406M1224 485L1244 462" stroke="#1f5140" fill="none"/>
        <path d="M1184 384V458" stroke="#6a2ca8" stroke-width="3"/><path d="M1183 458L1245 497" stroke="#8628ec" stroke-width="5"/>
        <path d="M1241 365h4v8h-3v-2zM1241 381h4v9h-3v-2zM1241 397h4v9h-3v-2zM1241 413h4v9h-3v-2z" fill="#5a00b0"/>
        <path d="M1244 362L1254 354V498L1246 506 1244 500z" fill="#5000a2"/><path class="cap" d="M1244 362L1252 354 1254 357 1246 365z"/>
        <circle cx="1257" cy="449" r="2" class="redln"/>

        <path d="M969 602L1034 643V700L969 660z" fill="#06043a"/>
        <path d="M975 607L984 612V666H975z" fill="#2c008a"/><path d="M984 612L1026 638 991 669 984 664z" fill="#28263f"/>
        <path d="M992 665L1019 636M1000 668L1025 640" stroke="#52092f"/>
        <path d="M971 603V661" stroke="#1414bd" stroke-width="5"/><path d="M969 660L1034 701" stroke="#5b5915" stroke-width="5"/><path d="M971 657L1034 696" stroke="#1818e8" stroke-width="5"/>
        <path d="M1031 597h4v9h-3v-2zM1031 613h4v9h-3v-2zM1031 629h4v9h-3v-2zM1031 710h4v9h-3v-2zM1031 726h5v9h-5z" fill="#5a00b0"/>
        <path d="M1033 593L1044 586V728L1036 737 1033 733z" fill="#5000a2"/><path class="cap" d="M1033 593L1042 586 1044 588 1035 597z"/>

        <g class="balloon">
          <circle cx="768" cy="199" r="12"/><circle cx="669" cy="308" r="12"/><circle cx="569" cy="418" r="12"/><circle cx="1160" cy="178" r="12"/><circle cx="1350" cy="261" r="12"/><circle cx="624" cy="768" r="12"/><circle cx="790" cy="876" r="12"/><circle cx="1404" cy="611" r="12"/><circle cx="1305" cy="720" r="12"/><circle cx="1205" cy="830" r="12"/>
        </g>
        <g class="dim">
          <text x="768" y="205">3</text><text x="669" y="314">2</text><text x="569" y="424">1</text><text x="1160" y="184">B</text><text x="1350" y="267">A</text><text x="624" y="774">B</text><text x="790" y="882">A</text><text x="1404" y="617">3</text><text x="1305" y="726">2</text><text x="1205" y="836">1</text>
          <text transform="translate(1230 247) rotate(33)" y="6">3350</text>
          <text transform="translate(841 333) rotate(-47)" y="6">2600</text>
          <text transform="translate(716 339) rotate(-47)" y="6">5200</text>
          <text transform="translate(741 442) rotate(-47)" y="6">2600</text>
          <text transform="translate(715 623) rotate(33)" y="6">1000</text>
          <text transform="translate(887 678) rotate(33)" y="6">5100</text>
          <text transform="translate(893 738) rotate(33)" y="6">600</text>
          <text transform="translate(744 782) rotate(33)" y="6">3350</text>
          <text transform="translate(932 766) rotate(33)" y="6">1000</text>
          <text transform="translate(945 774) rotate(33)" y="6">1000</text>
          <text transform="translate(951 778) rotate(33)" y="6">1050</text>
          <text transform="translate(1007 783) rotate(-47)" y="6">225</text>
          <text transform="translate(1018 772) rotate(-47)" y="6">1750</text>
          <text transform="translate(1023 766) rotate(-47)" y="6">1500</text>
          <text transform="translate(1036 753) rotate(-47)" y="6">1000</text>
          <text transform="translate(1272 492) rotate(-47)" y="6">1000</text>
          <text transform="translate(1233 587) rotate(-47)" y="6">2600</text>
          <text transform="translate(1156 620) rotate(-47)" y="6">125</text>
          <text transform="translate(1133 697) rotate(-47)" y="6">2600</text>
          <text transform="translate(1258 690) rotate(-47)" y="6">5200</text>
        </g>
        <g class="axes">
          <path d="M545 956L531 951" stroke="#00c800" stroke-width="4"/><path d="M521 945l13-1-4 10z" fill="#0d0"/>
          <path d="M545 956L556 948" stroke="#d00" stroke-width="4"/><path d="M564 940l-4 11-7-7z" fill="#e00"/>
          <path d="M545 956V948" stroke="#22f" stroke-width="4"/><path d="M545 943l6 9h-12z" fill="#1a1aff"/>
          <circle cx="545" cy="959" r="4" fill="#ccc"/>
          <text x="516" y="946" fill="#0e0">Y</text><text x="545" y="945" fill="#22f">Z</text><text x="567" y="941" fill="#f00">X</text>
        </g>
      </svg>
      <div class="viewtools">
        <button aria-label="动态观察"><svg width="26" height="24" viewBox="0 0 26 24"><circle cx="13" cy="12" r="10" fill="#b9c7d9" stroke="#3c4452"/><ellipse cx="11" cy="8" rx="5" ry="4" fill="#e4ebf4"/><circle cx="20" cy="7" r="4" fill="#c4d2e4" stroke="#3c4452"/><path d="M2 18q10 1 20-10" fill="none" stroke="#3c4452" stroke-width="2"/><circle cx="3" cy="18" r="2" fill="#888" stroke="#3c4452"/></svg></button>
        <button aria-label="二维"><svg width="24" height="24" viewBox="0 0 24 24"><path d="M.500 .500h23v22H.500z" fill="#8597ad" stroke="#2f3b4c"/><text x="21" y="20" text-anchor="end" font-size="7" fill="#222">2D</text></svg></button>
        <button aria-label="三维线框"><svg width="24" height="24" viewBox="0 0 24 24"><path d="M.500 5.500l5-5h18v17l-5 5H.500z" fill="#b5cbe6" stroke="#2f3b4c"/><path d="M5 5.500h13v12H5z" fill="#d8eaff"/><path d="M.500 5.500h18v17M18.500 5.500l5-5M5.500 1v17H23M5.500 18l-5 4" fill="none" stroke="#2f3b4c"/></svg><svg class="caret"><use href="#i-caret"/></svg></button>
        <button aria-label="三维实体"><svg width="24" height="24" viewBox="0 0 24 24"><path d="M.500 5.500l5-5h18v17l-5 5H.500z" fill="#8597ad" stroke="#2f3b4c"/><path d="M.500 5.500h18v17M18.500 5.500l5-5" fill="none" stroke="#2f3b4c"/></svg><svg class="caret"><use href="#i-caret"/></svg></button>
        <button aria-label="旋转视图"><svg width="24" height="24" viewBox="0 0 24 24"><path d="M20 19a10 10 0 1 1 1-12" fill="none" stroke="#2f3b4c" stroke-width="2"/><path d="M22 1v8h-7z" fill="#2f3b4c"/></svg><svg class="caret"><use href="#i-caret"/></svg></button>
        <button aria-label="显示选项" class="opt"><svg width="24" height="24" viewBox="0 0 24 24"><path d="M.500 3.500l2-3h19l2 3v19H.500zM0 3.500h24" fill="#8597ad" stroke="#2f3b4c"/><path d="M3.500 9.500h3v2h-3zM3.500 13.500h3v2h-3zM3.500 17.500h3v2h-3zM14.500 9.500h3v2h-3zM14.500 13.500h3v2h-3zM14.500 17.500h3v2h-3zM8 10.500h2M8 14.500h2M8 18.500h2M19 10.500h2M19 14.500h2M19 18.500h2M12 9v11M3 6l1 1 2-2M14 6l1 1 2-2" fill="none" stroke="#1f2937"/></svg></button>
      </div>
    </section>

    <div class="splitter right"></div>

    <aside class="panel display">
      <div class="grip"><button aria-label="关闭显示设置">×</button></div>
      <h2 class="ptitle">显示设置</h2>
      <div class="dtabs"><button class="on">图元显示</button><button>楼层显示</button></div>
      <div class="dispbody">
        <table class="disptable">
          <colgroup><col class="c-layer"><col class="c-show"><col class="c-show"></colgroup>
          <thead><tr><th>图层构件</th><th>显示图元</th><th>显示名称</th></tr></thead>
          <tbody id="display"></tbody>
        </table>
        <div class="thumb dispthumb"></div>
      </div>
      <div class="dispfoot"><button class="btn">恢复默认设置</button></div>
    </aside>
  </main>

  <footer class="status">
    <span class="s-xyz">X&nbsp; = &nbsp;673&nbsp; Y&nbsp; = &nbsp;-2332&nbsp; Z&nbsp; = &nbsp;0</span>
    <span class="s-floor">层高:&nbsp;&nbsp; 4.2</span>
    <span class="s-elev">标高:&nbsp;&nbsp; 0~4.2</span>
    <span class="s-zero">0</span>
    <span class="s-hide">隐藏:&nbsp; 0</span>
    <div class="sbtns">
      <button aria-label="正交"><svg width="14" height="14" viewBox="0 0 14 14"><path d="M2.500 1v11.500H13M3 9.500h3.500v3" fill="none" stroke="#333"/></svg></button>
      <button aria-label="选择框" class="wide on"><svg width="16" height="16" viewBox="0 0 16 16"><path d="M3.500 2.500h10v12h-10z" fill="none" stroke="#3f86d8"/><path d="M1.500 1.500h3v3h-3z" fill="#f7b384" stroke="#e8752a"/></svg><svg class="caret"><use href="#i-caret"/></svg></button>
      <button aria-label="交点" class="dim1"><svg width="16" height="16" viewBox="0 0 16 16"><path d="M1 1l14 14M15 1L1 15" stroke="#888"/><circle cx="8" cy="8" r="1.500" fill="#888"/></svg></button>
      <button aria-label="角度" class="wide"><svg width="16" height="14" viewBox="0 0 16 14"><path d="M12 1L1 12.500h14" fill="none" stroke="#333"/><circle cx="7" cy="6" r="2" fill="#333"/></svg><svg class="caret"><use href="#i-caret"/></svg></button>
      <button aria-label="动态输入" class="wide"><svg width="16" height="14" viewBox="0 0 16 14"><path d="M0 3.500h7M3.500 0v7" stroke="#333"/><path d="M6 8h10v5H6z" fill="#333"/></svg><svg class="caret"><use href="#i-caret"/></svg></button>
      <button class="txt">跨图层选择</button>
      <button class="txt">折线选择</button>
    </div>
    <span>按鼠标左键指定第一个角点，或拾取构件图元</span>
    <span class="fps">1000 FPS</span>
  </footer>
  <button class="upload"><span class="mark"><svg width="20" height="16" viewBox="0 0 20 16"><g fill="none" stroke="#fff" stroke-width="3"><circle cx="10" cy="5" r="3.500"/><circle cx="5" cy="11" r="3.500"/><circle cx="15" cy="11" r="3.500"/></g></svg></span><span class="word">拖拽上传</span></button>
</div>
<div class="behind"><i class="b1"></i><i class="b2"></i><i class="b3"></i><i class="b4"></i></div>
</div>
<div class="taskbar"><i class="running"></i><span class="clock">15:18</span></div>
<script src="app.js"></script>
</body>
</html>
```
FILE: styles.css
```css
* { box-sizing: border-box; }
html, body { height: 100%; margin: 0; }
body { display: flex; flex-direction: column; overflow: hidden; font: 12px/16px "Open Sans", "Noto Sans CJK SC", sans-serif; color: #111; background: #fff; }
button { font: inherit; color: inherit; border: 0; background: none; padding: 0; margin: 0; display: flex; align-items: center; white-space: nowrap; }
input, select { font: inherit; color: inherit; margin: 0; }
svg { display: block; flex: none; }
ul { list-style: none; margin: 0; padding: 0; }
a { color: inherit; text-decoration: none; }
h1, h2 { font: inherit; margin: 0; }
.defs { position: absolute; width: 0; height: 0; }
.caret { width: 7px; height: 4px; color: #555; }

.desktop { flex: 1; min-height: 0; display: flex; }
.app { flex: 1; min-width: 0; display: flex; flex-direction: column; position: relative; background: #fff; }
.behind { width: 8px; display: flex; flex-direction: column; background: #e8e8e8; }
.behind i { flex: none; }
.b1 { height: 29px; background: #5b8cff; }
.b2 { height: 103px; background: #f4f4f4; border-bottom: 1px solid #d0d0d0; }
.behind .b3 { flex: 1; }
.b4 { height: 27px; background: #f5f5f5; }
.taskbar { height: 9px; flex: none; display: flex; overflow: hidden; background: #222; border-top: 1px solid #fff; padding: 0 80px 0 490px; justify-content: space-between; }
.running { width: 50px; background: #4a4a4a; }
.clock { color: #fff; padding-top: 3px; }

/* title and tabs */
.top { display: flex; height: 41px; flex: none; }
.logo { position: relative; width: 45px; justify-content: center; padding-top: 4px; border-right: 1px solid #d4d4d4; }
.corner { position: absolute; right: 4px; bottom: 2px; }
.topmain { flex: 1; display: flex; flex-direction: column; border-bottom: 1px solid #d0d4d8; }
.titlebar { height: 22px; display: flex; align-items: center; }
.qat { display: flex; gap: 7px; padding-left: 9px; width: 515px; }
.qat svg:not(.caret) { width: 16px; height: 16px; }
.qat .split { gap: 3px; }
.qat .off .caret { color: #aaa; }
.qat .more .caret { height: 8px; }
h1 { flex: 1; }
.wincontrols { display: flex; gap: 28px; padding-right: 14px; }
.tabbar { flex: 1; display: flex; justify-content: space-between; }
.tabs { display: flex; padding-left: 5px; }
.tabs a { padding: 2px 13px 1px; height: 19px; line-height: 18px; color: #333; }
.tabs a.on { background: #57a5f7; color: #fff; }
.help { display: flex; align-items: flex-start; gap: 4px; padding-right: 6px; }
.asksearch { display: flex; align-items: center; width: 245px; height: 17px; border: 1px solid #c4c4c4; padding: 0 6px 0 2px; margin-right: 4px; color: #bbb; }
.asksearch input { flex: 1; min-width: 0; border: 0; padding: 0; height: 15px; background: none; }
.asksearch input::placeholder { color: #bbb; opacity: 1; }
.help .skin { margin: 0 4px 0 8px; }

/* ribbon */
.ribbon { display: flex; height: 98px; flex: none; background: linear-gradient(#fff 50%, #e8edee); border-bottom: 1px solid #9a9ea2; }
.group { position: relative; display: flex; flex-direction: column; padding: 3px 0 0 9px; flex: none; }
.group::after { content: ""; position: absolute; right: 0; top: 2px; bottom: 3px; width: 1px; background: #c9ccd0; }
.g-select { width: 146px; padding-left: 8px; }
.g-cad { width: 194px; }
.g-common { width: 276px; }
.g-modify { width: 237px; }
.g-draw { width: 119px; padding-left: 11px; }
.g-identify { width: 370px; padding-left: 8px; }
.g-second { width: 153px; padding-left: 7px; }
.tools { display: flex; gap: 11px; height: 73px; }
.g-select .tools, .g-second .tools { gap: 6px; }
.g-common .tools { gap: 10px; }
.g-draw .tools { gap: 12px; }
.g-identify .tools { gap: 8px; }
.col { display: flex; flex-direction: column; flex: none; }
.tool { height: 23px; gap: 3px; }
.tool svg:not(.caret) { width: 16px; height: 16px; }
.tool .caret { margin-left: 2px; }
button:disabled { color: #aaa; }
button:disabled .caret { color: #b5b5b5; }
.big { flex: none; flex-direction: column; gap: 3px; padding-top: 2px; height: 67px; margin-top: 2px; min-width: 30px; }
.big svg:not(.caret) { width: 30px; height: 30px; }
.big.on { width: 40px; padding-top: 3px; background: #c9daf1; }
.big .caret { width: 5px; margin-top: 2px; }
.name { display: flex; justify-content: center; align-items: center; gap: 6px; padding-right: 9px; height: 18px; }
span.name { height: 20px; }

/* combo row */
.filters { display: flex; gap: 1px; height: 27px; flex: none; padding: 2px; background: #c9ccd1; border-bottom: 1px solid #8f9297; }
.combo { position: relative; width: 99px; height: 22px; }
.combo select { appearance: none; width: 100%; height: 100%; border: 1px solid #aaadb2; border-radius: 0; background: #fff; padding: 0 3px; }
.combo .caret { position: absolute; right: 5px; top: 10px; width: 5px; height: 4px; }

/* work area */
.main { flex: 1; min-height: 0; display: flex; }
.panel { display: flex; flex-direction: column; background: #fff; border: 1px solid #c3c5cb; border-top: 0; min-height: 0; }
.grip { display: flex; justify-content: flex-end; align-items: center; height: 12px; flex: none; background: #d4d5db; border-bottom: 1px solid #c6c7cc; padding-right: 4px; }
.grip button { font-size: 14px; line-height: 10px; color: #666; }
.ptitle { height: 22px; flex: none; padding: 3px 8px; background: #efefef; border-bottom: 1px solid #cfd0d4; color: #777; }
.thumb { position: absolute; width: 8px; border-radius: 4px; background: #c8c8c8; }
.nav { width: 211px; flex: none; }
.navtools { display: flex; align-items: center; gap: 4px; height: 28px; flex: none; background: #efefef; border-bottom: 1px solid #cfd0d4; padding: 0 1px 0 6px; }
.navtools .plus { margin-right: auto; }
.view { width: 24px; height: 22px; justify-content: center; border: 1px solid #4a97ec; border-radius: 3px; background: #e4effb; }
.navbody { position: relative; flex: 1; min-height: 0; overflow: hidden; padding-top: 3px; }
.navthumb { right: 3px; top: 16px; height: 61%; }
.navlist li { display: flex; align-items: center; height: 24px; padding-left: 2px; gap: 5px; }
.navlist svg { width: 16px; height: 16px; }
.navlist .child { padding-left: 40px; }
.navlist .item { display: flex; align-items: center; gap: 6px; height: 21px; padding-left: 3px; }
.navlist .sel { background: #c9daf1; width: 140px; }

.middle { width: 280px; flex: none; display: flex; flex-direction: column; gap: 4px; padding-left: 4px; }
.comps { flex: 1; border-bottom-color: #aaa; }
.ptabs { display: flex; height: 23px; flex: none; background: #efefef; border-bottom: 1px solid #cfd0d4; color: #808080; }
.ptabs button { width: 65px; justify-content: center; border-right: 1px solid #c8c9cd; background: #dfdfdf; }
.ptabs .on { background: #efefef; color: #111; font-weight: 500; }
.comptools { display: flex; align-items: center; gap: 9px; height: 28px; flex: none; background: #efefef; border-bottom: 1px solid #cfd0d4; padding: 0 3px 0 6px; }
.comptools button { gap: 3px; }
.comptools svg:not(.caret):not([width]) { width: 16px; height: 16px; }
.comptools .caret { margin-left: 2px; width: 5px; }
.comptools .more { margin-left: auto; }
.search { display: flex; align-items: center; height: 19px; flex: none; border-bottom: 1px solid #c3c5cb; padding: 0 4px 0 1px; }
.search input { flex: 1; min-width: 0; border: 0; padding: 0; }
.search input::placeholder { color: #777; opacity: 1; }
.search svg { width: 14px; height: 14px; color: #3597c9; }
.comptree { padding: 3px 10px; }
.comptree li { display: flex; align-items: center; gap: 7px; height: 24px; }
.comptree .l1 { padding-left: 20px; }
.comptree .l2 { padding-left: 50px; }
.comptree .sel { background: #b1cdf0; padding: 2px 4px 3px; }
.tri { width: 6px; height: 6px; fill: #222; }

.props { height: 337px; flex: none; }
.propbody { position: relative; flex: 1; min-height: 0; overflow: hidden; border-bottom: 1px solid #b5b7bc; padding-right: 16px; }
.propthumb { right: 3px; top: 14px; height: 40%; }
table { border-collapse: separate; border-spacing: 0; table-layout: fixed; width: 100%; }
th, td { height: 21px; padding: 0 3px; border-right: 1px solid #cfd0d4; border-bottom: 1px solid #cfd0d4; font-weight: 400; white-space: nowrap; overflow: hidden; text-overflow: ellipsis; }
th { background: #f0f0f0; color: #333; text-align: center; }
.c-no { width: 22px; } .c-name { width: 101px; } .c-val { width: 95px; }
.proptable .no { background: #f0f0f0; color: #333; text-align: center; padding: 0; }
.proptable .key { color: #1763ee; text-align: left; }
.proptable .grey { background: #ebebeb; }
.grade { font-size: 10px; line-height: 10px; vertical-align: 2px; }
.mid { text-align: center; }
input[type=checkbox] { appearance: none; display: block; position: relative; width: 14px; height: 14px; margin: 0 auto; border: 1px solid #777; border-radius: 3px; background: #fff; }
input[type=checkbox]:checked { background: #4e9df9; border-color: #4e9df9; }
input[type=checkbox]:checked::after { content: ""; position: absolute; left: 4px; top: 1px; width: 4px; height: 8px; border: solid #fff; border-width: 0 2px 2px 0; transform: rotate(45deg); }
input[type=checkbox]:indeterminate::after { content: ""; position: absolute; left: 1px; top: 1px; width: 10px; height: 10px; border: 1px solid #4a94ee; border-radius: 1px; background: #9cc8fa; }
input[type=checkbox]:disabled { background: #efefef; border-color: #aaa; }
.propfoot { height: 30px; flex: none; background: #efefef; padding: 3px 5px; }
.btn { height: 24px; width: 80px; justify-content: center; border: 1px solid #c3c3c7; border-radius: 3px; background: #fff; }

.splitter { width: 4px; flex: none; background: linear-gradient(#5b6675, #5b6675) 0 373px / 4px 100px no-repeat #fff; }
.stage { position: relative; flex: 1; min-width: 0; background: #000; overflow: hidden; }
.scene { width: 100%; height: 100%; }
.green, .red, .white { fill: none; }
.green, .balloon { stroke: #008a00; fill: none; }
.red, .redln { stroke: #8e0000; fill: none; }
.white { stroke: #c8c8c8; }
.rl { stroke: #f00; fill: none; }
.inner { fill: #3e3c0c; }
.face { fill: #47440f; }
.strip { fill: #636012; }
.band { stroke: #2320b0; stroke-width: 3; fill: none; }
.band.w { stroke-width: 4; }
.cap { fill: #7c00ff; }
.dim text { fill: #fff; font-size: 18px; text-anchor: middle; }
.axes text { font-size: 14px; text-anchor: middle; }
.viewtools { position: absolute; right: 0; top: 0; width: 33px; height: 227px; display: flex; flex-direction: column; align-items: center; gap: 5px; padding-top: 10px; background: #97989c; border: 1px solid #a9aaad; border-width: 1px 1px 1px 0; }
.viewtools button { flex-direction: column; gap: 6px; }
.viewtools .caret { width: 6px; color: #333; }
.viewtools .opt { border-top: 1px solid #666; padding-top: 4px; }

.display { width: 270px; flex: none; }
.dtabs { display: flex; align-items: flex-end; gap: 3px; height: 28px; flex: none; background: #efefef; border-bottom: 1px solid #c8c8cc; padding-left: 2px; color: #555; }
.dtabs button { width: 74px; height: 22px; justify-content: center; background: #dedede; border-radius: 3px 3px 0 0; }
.dtabs .on { width: 76px; height: 25px; background: #fff; border: 1px solid #c8c8cc; border-bottom: 0; color: #2f86ee; margin-bottom: -1px; }
.dispbody { position: relative; flex: 1; min-height: 0; overflow: hidden; margin: 2px 2px 0; border: 1px solid #bbbcc0; padding-right: 14px; }
.dispthumb { right: 3px; top: 14px; height: 27%; }
.c-show { width: 63px; }
.disptable td:first-child { position: relative; padding: 0; text-overflow: clip; }
.node { display: flex; align-items: center; gap: 5px; height: 20px; padding-left: 2px; }
.lv1 .node { padding-left: 12px; }
.lv2 .node { padding-left: 41px; }
.label { overflow: hidden; text-overflow: ellipsis; max-width: 70px; }
.tog { width: 13px; height: 13px; justify-content: center; border: 1px solid #666; border-radius: 2px; background: #fff; position: relative; z-index: 1; }
.tog::before { content: ""; width: 5px; height: 1px; background: #333; }
.lv1 td:first-child::before, .lv2 td:first-child::before { content: ""; position: absolute; left: 8px; top: 0; bottom: 0; border-left: 1px solid #dadada; }
.lv2 td:first-child::after { content: ""; position: absolute; left: 18px; top: 0; bottom: 0; width: 17px; border-left: 1px solid #dadada; background: linear-gradient(#dadada, #dadada) 0 10px / 100% 1px no-repeat; }
.lv2.last td:first-child::after { bottom: 10px; }
.dispfoot { flex: none; display: flex; justify-content: flex-end; padding: 6px 8px; height: 39px; }
.dispfoot .btn { width: 90px; height: 26px; }

/* status bar */
.status { display: flex; align-items: center; height: 29px; flex: none; background: #dcdcdf; padding: 0 28px 0 2px; color: #222; }
.s-xyz { width: 263px; } .s-floor { width: 83px; } .s-elev { width: 133px; } .s-zero { width: 103px; } .s-hide { width: 103px; }
.sbtns { display: flex; gap: 3px; margin-right: 5px; }
.sbtns button { height: 25px; width: 25px; justify-content: center; gap: 6px; border: 1px solid #8e8e90; background: #cdcdcf; }
.sbtns .wide { width: 36px; }
.sbtns .on { background: #fff; border-color: #1f8ff0; margin-right: 3px; }
.sbtns .dim1 { border-color: #b0b0b0; margin-right: 3px; }
.sbtns .caret { width: 5px; }
.sbtns .txt { width: auto; padding: 0 5px; }
.fps { margin-left: auto; }

.upload { position: absolute; right: 42px; top: 29px; width: 104px; height: 25px; border: 1px solid #1f93f5; border-radius: 3px; background: linear-gradient(#e4f6ff, #bfe6fb); overflow: hidden; color: #2ea4f5; }
.mark { width: 29px; height: 100%; display: flex; align-items: center; justify-content: center; background: #20a0ff; }
.word { flex: 1; }
```
FILE: app.js
```js
const use = id => `<svg aria-hidden="true"><use href="#${id}"/></svg>`;

// Navigation tree: strings are collapsed groups, arrays are [group, [icon, item]...]
const nav = [
  "常用构件类型", "轴线",
  ["柱", ["t-col", "柱(Z)"], ["t-gz", "构造柱(Z)", true], ["t-brick", "砌体柱(Z)"], ["t-hatch", "约束边缘非阴影区(Z)"]],
  "墙",
  ["门窗洞", ["t-door", "门(M)"], ["t-win", "窗(C)"], ["t-dw", "门联窗(A)"], ["t-hole", "墙洞(D)"], ["t-sw", "带形窗(C)"], ["t-sh", "带形洞(D)"], ["t-bay", "飘窗(X)"], ["t-dormer", "老虎窗"], ["t-lintel", "过梁(G)"], ["t-niche", "壁龛(I)"]],
  "梁", "板", "装配式", "空心楼盖", "楼梯", "装修",
  ["土方", ["t-ex", "大开挖土方(W)"], ["t-trench", "基槽土方(C)"], ["t-pit", "基坑土方(K)"], ["t-fill", "大开挖灰土回填"], ["t-dots", "基槽灰土回填"], ["t-fillup", "基坑灰土回填"], ["t-room", "房心回填"]]
];
document.getElementById("nav").innerHTML = nav.map(g => {
  if (typeof g === "string") return `<li>${use("i-folder")}${g}</li>`;
  const [name, ...items] = g;
  return `<li>${use("i-folderopen")}${name}</li>` + items.map(([icon, text, sel]) =>
    `<li class="child"><span class="item${sel ? " sel" : ""}">${use(icon)}${text}</span></li>`).join("");
}).join("");

// Attribute grid; {g} stands for the steel grade mark
const props = [
  ["名称", "GZ-1"], ["类别", "构造柱"], ["截面宽度(B边)(mm)", "200"], ["截面高度(H边)(mm)", "50"],
  ["马牙槎设置", "带马牙槎"], ["马牙槎宽度(mm)", "60"], ["全部纵筋", "4{g}12"], ["角筋", null],
  ["B边一侧中部筋", null], ["H边一侧中部筋", null], ["箍筋", "{g}6@200(2*2)"], ["箍筋肢数", "2*2"]
];
document.getElementById("props").innerHTML = props.map(([k, v], i) =>
  `<tr><td class="no">${i + 1}</td><td class="key">${k}</td><td class="${v === null ? "grey" : ""}">${(v || "").replace("{g}", '<span class="grade">中</span>')}</td>` +
  `<td class="mid">${i === 0 || i === 11 ? "" : `<input type="checkbox" aria-label="附加 ${k}">`}</td></tr>`).join("");

// Layer visibility: [level, name, state]; state 1 = shown, 0 = hidden, 2 = partly shown
const layers = [
  [0, "所有构件", 2], [1, "轴线", 1, true], [2, "轴网", 1, true], [2, "辅助轴线", 1, true],
  [1, "柱", 1], [2, "柱", 1], [2, "构造柱", 1], [2, "砌体柱", 1], [2, "约束边缘非阴影区", 1],
  [1, "墙", 2], [2, "剪力墙", 1], [2, "人防门框墙", 1], [2, "砌体墙", 1], [2, "砌体加筋", 0], [2, "保温墙", 1], [2, "暗梁", 0], [2, "墙垛", 0], [2, "幕墙", 1],
  [1, "门窗洞", 2], [2, "门", 1], [2, "窗", 1], [2, "门联窗", 1], [2, "墙洞", 1], [2, "带形窗", 0], [2, "带形洞", 0], [2, "飘窗", 0], [2, "老虎窗", 0], [2, "过梁", 0], [2, "壁龛", 0],
  [1, "梁", 1], [2, "梁", 1], [2, "连梁", 1], [2, "圈梁", 1],
  [1, "板", 2], [2, "现浇板", 0]
];
const body = document.getElementById("display");
body.innerHTML = layers.map(([lv, name, state, locked], i) => {
  const last = lv === 2 && (layers[i + 1] || [2])[0] < 2;
  const toggle = lv < 2 ? `<button class="tog" aria-label="折叠 ${name}"></button>` : "";
  return `<tr class="lv${lv}${last ? " last" : ""}"><td><div class="node">${toggle}<span class="label">${name}</span></div></td>` +
    `<td><input type="checkbox" aria-label="显示图元 ${name}"${state === 1 ? " checked" : ""}${state === 2 ? " data-mixed" : ""}></td>` +
    `<td><input type="checkbox" aria-label="显示名称 ${name}"${locked ? " disabled" : ""}></td></tr>`;
}).join("");
body.querySelectorAll("[data-mixed]").forEach(box => { box.indeterminate = true; });
```
